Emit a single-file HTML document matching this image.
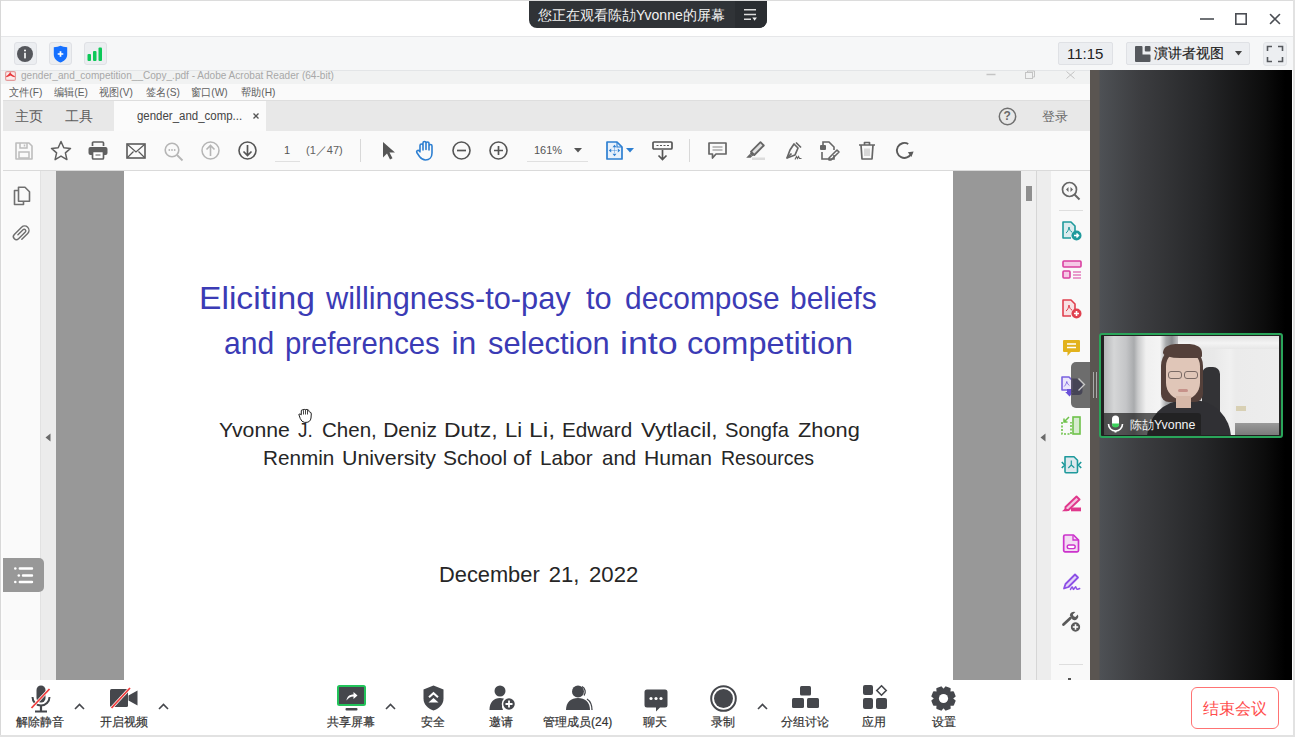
<!DOCTYPE html>
<html><head><meta charset="utf-8">
<style>
*{box-sizing:border-box}
html,body{margin:0;padding:0}
body{width:1295px;height:737px;position:relative;overflow:hidden;background:#fff;font-family:"Liberation Sans",sans-serif;color:#333}
.a{position:absolute}
.t{position:absolute;white-space:nowrap;line-height:1}
svg{position:absolute;overflow:visible}
</style></head><body>

<!-- window borders -->
<div class="a" style="left:0;top:0;width:1295px;height:1px;background:#dcdcdc"></div>
<div class="a" style="left:0;top:0;width:1px;height:737px;background:#d8d8d8"></div>
<div class="a" style="left:1293px;top:0;width:2px;height:737px;background:#e2e2e2"></div>
<div class="a" style="left:0;top:735px;width:1295px;height:2px;background:#e2e2e2"></div>

<!-- title pill -->
<div class="a" style="left:529px;top:1px;width:238px;height:27px;background:#303337;border-radius:0 0 8px 8px"></div>
<div class="a" style="left:735px;top:1px;width:32px;height:27px;background:#2a2d31;border-radius:0 0 8px 0"></div>
<div class="t" style="left:538px;top:8px;font-size:14px;color:#f2f2f2">您正在观看陈劼Yvonne的屏幕</div>
<svg style="left:743px;top:8px" width="16" height="14" viewBox="0 0 16 14">
 <path d="M1 1.8h12M1 6.5h12M1 11.2h7" stroke="#dcdcdc" stroke-width="1.6" fill="none"/>
 <path d="M9.3 9.6h4.6l-2.3 3.2z" fill="#f0f0f0"/>
</svg>

<!-- window controls -->
<svg style="left:1199px;top:12px" width="86" height="14" viewBox="0 0 86 14">
 <path d="M1 7h14" stroke="#4b4e54" stroke-width="1.6"/>
 <rect x="36.8" y="1.8" width="10.4" height="10.4" stroke="#4b4e54" stroke-width="1.6" fill="none"/>
 <path d="M71.5 2.5l9 9M80.5 2.5l-9 9" stroke="#4b4e54" stroke-width="1.6" stroke-linecap="round"/>
</svg>

<!-- second bar -->
<div class="a" style="left:1px;top:36px;width:1292px;height:35px;background:#f6f7f8;border-top:1px solid #e6e7e9"></div>
<div class="a" style="left:14px;top:42px;width:23px;height:23px;background:#eceef1;border:1px solid #dfe1e5;border-radius:3px"></div>
<div class="a" style="left:49px;top:42px;width:23px;height:23px;background:#eceef1;border:1px solid #dfe1e5;border-radius:3px"></div>
<div class="a" style="left:84px;top:42px;width:23px;height:23px;background:#eceef1;border:1px solid #dfe1e5;border-radius:3px"></div>
<svg style="left:17px;top:46px" width="16" height="16" viewBox="0 0 16 16">
 <circle cx="8" cy="8" r="8" fill="#55575c"/><rect x="7.2" y="6.8" width="1.6" height="5.6" fill="#fff"/><circle cx="8" cy="4.6" r="1" fill="#fff"/>
</svg>
<svg style="left:53px;top:45px" width="15" height="18" viewBox="0 0 15 18">
 <path d="M7.5 0.8Q5 2.2 0.8 2.2v7.3c0 4 3 6.8 6.7 8 3.7-1.2 6.7-4 6.7-8V2.2Q10 2.2 7.5 0.8z" fill="#1570ff"/>
 <path d="M7.5 6.2v5.6M4.7 9h5.6" stroke="#fff" stroke-width="1.7"/>
</svg>
<svg style="left:86px;top:46px" width="18" height="16" viewBox="0 0 18 16">
 <rect x="1.5" y="8" width="3.5" height="7" rx="1" fill="#0cc858"/>
 <rect x="7" y="5" width="3.5" height="10" rx="1" fill="#0cc858"/>
 <rect x="12.5" y="1.5" width="3.5" height="13.5" rx="1" fill="#0cc858"/>
</svg>

<div class="a" style="left:1058px;top:42px;width:55px;height:23px;background:#eceef1;border:1px solid #dfe1e5;border-radius:2px"></div>
<div class="t" style="left:1067px;top:46px;font-size:15px;color:#222">11:15</div>
<div class="a" style="left:1126px;top:42px;width:124px;height:23px;background:#eceef1;border:1px solid #dfe1e5;border-radius:2px"></div>
<svg style="left:1135px;top:46px" width="16" height="16" viewBox="0 0 16 16">
 <path d="M1 0h5.5a1 1 0 0 1 1 1v7.5h7a1 1 0 0 1 1 1V15a1 1 0 0 1-1 1H1a1 1 0 0 1-1-1V1a1 1 0 0 1 1-1z" fill="#55585d"/><rect x="9.8" y="0" width="5.7" height="5.5" rx="1" fill="#55585d"/>
</svg>
<div class="t" style="left:1154px;top:46px;font-size:14px;color:#222;-webkit-text-stroke:0.15px #222">演讲者视图</div>
<svg style="left:1235px;top:51px" width="7" height="5" viewBox="0 0 7 5"><path d="M0 0h7L3.5 4.5z" fill="#444"/></svg>
<div class="a" style="left:1263px;top:42px;width:24px;height:24px;background:#eceef1;border:1px solid #e2e4e7;border-radius:3px"></div>
<svg style="left:1266px;top:45px" width="18" height="18" viewBox="0 0 18 18">
 <path d="M1.5 6V1.5H6M12 1.5h4.5V6M16.5 12v4.5H12M6 16.5H1.5V12" stroke="#55585d" stroke-width="1.6" fill="none"/>
</svg>

<!-- ========== SHARED SCREEN ========== -->
<!-- acrobat title bar -->
<div class="a" style="left:1px;top:70px;width:1089px;height:14px;background:#f1f2f2;border-top:1px solid #e3e5e7"></div>
<svg style="left:5px;top:71px" width="11" height="10" viewBox="0 0 11 10">
 <rect x="0.6" y="0.6" width="9.8" height="8.8" rx="1.5" fill="#fbeaea" stroke="#e39a9a" stroke-width="1.2"/>
 <path d="M1 5.2Q3 4.5 4.2 2.6L5.2 0.8 6 2.6Q7.5 4.5 10 5.2L9.5 6.2Q7 5.5 5.5 4.5 3.5 5.8 1.5 6.2z" fill="#e8383a"/>
</svg>
<div class="t" style="left:21px;top:70px;font-size:11px;color:#a8a8a8;transform:scaleX(0.915);transform-origin:0 0">gender_and_competition__Copy_.pdf - Adobe Acrobat Reader (64-bit)</div>
<svg style="left:985px;top:70px" width="92" height="10" viewBox="0 0 92 10">
 <path d="M1.5 4.5h9" stroke="#c4c4c4" stroke-width="1.5"/>
 <rect x="40.5" y="2.5" width="7" height="6" stroke="#c4c4c4" fill="none"/><path d="M42.5 2.5v-1.5h7v6h-2" stroke="#c4c4c4" fill="none"/>
 <path d="M81.5 1.5l8 7M89.5 1.5l-8 7" stroke="#c4c4c4" stroke-width="1"/>
</svg>
<!-- menu bar -->
<div class="a" style="left:1px;top:84px;width:1089px;height:16px;background:#fafafa"></div>
<div class="t" style="left:9px;top:87px;font-size:11px;color:#606060;transform:scaleX(0.925);transform-origin:0 0">文件(F)</div>
<div class="t" style="left:54px;top:87px;font-size:11px;color:#606060;transform:scaleX(0.925);transform-origin:0 0">编辑(E)</div>
<div class="t" style="left:99px;top:87px;font-size:11px;color:#606060;transform:scaleX(0.925);transform-origin:0 0">视图(V)</div>
<div class="t" style="left:146px;top:87px;font-size:11px;color:#606060;transform:scaleX(0.925);transform-origin:0 0">签名(S)</div>
<div class="t" style="left:191px;top:87px;font-size:11px;color:#606060;transform:scaleX(0.925);transform-origin:0 0">窗口(W)</div>
<div class="t" style="left:241px;top:87px;font-size:11px;color:#606060;transform:scaleX(0.925);transform-origin:0 0">帮助(H)</div>
<!-- tab bar -->
<div class="a" style="left:1px;top:100px;width:1089px;height:31px;background:#e8e8e8;border-top:1px solid #dedede"></div>
<div class="a" style="left:114px;top:101px;width:152px;height:30px;background:#fbfbfb"></div>
<div class="t" style="left:15px;top:109px;font-size:14px;color:#5c5c5c">主页</div>
<div class="t" style="left:65px;top:109px;font-size:14px;color:#5c5c5c">工具</div>
<div class="t" style="left:137px;top:110px;font-size:12.5px;color:#444;transform:scaleX(0.917);transform-origin:0 0">gender_and_comp...</div>
<svg style="left:253px;top:113px" width="6" height="6" viewBox="0 0 6 6"><path d="M.5 .5l5 5M5.5 .5l-5 5" stroke="#555" stroke-width="1.3"/></svg>
<svg style="left:998px;top:107px" width="19" height="19" viewBox="0 0 19 19">
 <circle cx="9.5" cy="9.5" r="8.2" stroke="#707070" stroke-width="1.5" fill="none"/>
</svg>
<div class="t" style="left:1003.5px;top:110px;font-size:12px;color:#6a6a6a;font-weight:bold">?</div>
<div class="t" style="left:1042px;top:110px;font-size:13px;color:#6a6a6a">登录</div>
<!-- toolbar -->
<div class="a" style="left:1px;top:131px;width:1089px;height:40px;background:#fafafa;border-bottom:1px solid #dadada"></div>
<!-- toolbar icons -->
<svg style="left:15px;top:142px" width="18" height="18" viewBox="0 0 18 18">
 <path d="M1 1h13l3 3v13H1z" stroke="#bdbdbd" stroke-width="1.6" fill="none" stroke-linejoin="round"/>
 <path d="M5 1v5h7V1M9.5 2.5v2" stroke="#bdbdbd" stroke-width="1.5" fill="none"/>
 <rect x="4" y="10" width="10" height="6" fill="none" stroke="#bdbdbd" stroke-width="1.5"/>
</svg>
<svg style="left:50px;top:140px" width="22" height="21" viewBox="0 0 22 21">
 <path d="M11 1.5l2.8 6.3 6.7.6-5.1 4.5 1.5 6.7L11 16.1l-5.9 3.5 1.5-6.7L1.5 8.4l6.7-.6z" stroke="#606060" stroke-width="1.5" fill="none" stroke-linejoin="round"/>
</svg>
<svg style="left:88px;top:141px" width="20" height="19" viewBox="0 0 20 19">
 <path d="M4.5 5V2a1 1 0 0 1 1-1h9a1 1 0 0 1 1 1v3" stroke="#606060" stroke-width="1.7" fill="none"/>
 <rect x="0.5" y="6" width="19" height="8" rx="2" fill="#606060"/>
 <rect x="4.5" y="10.5" width="11" height="7.5" rx="1" fill="#fff" stroke="#606060" stroke-width="1.7"/>
 <path d="M7.5 14h5" stroke="#999" stroke-width="1.6"/>
</svg>
<svg style="left:126px;top:143px" width="20" height="16" viewBox="0 0 20 16">
 <rect x="1" y="1" width="18" height="14" stroke="#5a5a5a" stroke-width="1.6" fill="none"/>
 <path d="M1.5 1.5L10 9l8.5-7.5M1.5 14.5l6-6M18.5 14.5l-6-6" stroke="#5a5a5a" stroke-width="1.2" fill="none"/>
</svg>
<svg style="left:164px;top:142px" width="20" height="20" viewBox="0 0 20 20">
 <circle cx="8" cy="8" r="6.8" stroke="#b5b5b5" stroke-width="1.6" fill="none"/>
 <path d="M13 13l5.5 5.5" stroke="#b5b5b5" stroke-width="1.8"/>
 <circle cx="5.3" cy="8" r=".9" fill="#b5b5b5"/><circle cx="8" cy="8" r=".9" fill="#b5b5b5"/><circle cx="10.7" cy="8" r=".9" fill="#b5b5b5"/>
</svg>
<svg style="left:201px;top:141px" width="19" height="19" viewBox="0 0 19 19">
 <circle cx="9.5" cy="9.5" r="8.5" stroke="#b5b5b5" stroke-width="1.5" fill="none"/>
 <path d="M9.5 15V4.5M5.5 8.5l4-4 4 4" stroke="#b5b5b5" stroke-width="1.6" fill="none"/>
</svg>
<svg style="left:238px;top:141px" width="19" height="19" viewBox="0 0 19 19">
 <circle cx="9.5" cy="9.5" r="8.5" stroke="#555" stroke-width="1.6" fill="none"/>
 <path d="M9.5 4v10.5M5.5 10.5l4 4 4-4" stroke="#555" stroke-width="1.7" fill="none"/>
</svg>
<div class="t" style="left:284px;top:145px;font-size:11px;color:#555">1</div>
<div class="a" style="left:275px;top:161px;width:25px;height:1px;background:#e0e0e0"></div>
<div class="t" style="left:306px;top:145px;font-size:11px;color:#606060;letter-spacing:0px">(1／47)</div>
<div class="a" style="left:360px;top:139px;width:1px;height:23px;background:#d8d8d8"></div>
<svg style="left:382px;top:141px" width="13" height="19" viewBox="0 0 13 19">
 <path d="M1 1v15.5l4-4 3 6 2.5-1.2-3-5.8h5.5z" fill="#555"/>
</svg>
<svg style="left:415px;top:140px" width="21" height="21" viewBox="0 0 21 21">
 <path d="M5 11V5.5a1.5 1.5 0 0 1 3 0V10M8 9.5V3a1.5 1.5 0 0 1 3 0v6.5M11 9.5V3.5a1.5 1.5 0 0 1 3 0v6.5M14 10V6a1.5 1.5 0 0 1 3 0v7c0 4-2.5 7-6.5 7-3 0-4.5-1.5-6-3.5L1.8 12.5a1.5 1.5 0 0 1 2.3-1.8L5 11.8" stroke="#2d7fd1" stroke-width="1.6" fill="none" stroke-linecap="round" stroke-linejoin="round"/>
</svg>
<svg style="left:452px;top:141px" width="19" height="19" viewBox="0 0 19 19">
 <circle cx="9.5" cy="9.5" r="8.5" stroke="#555" stroke-width="1.6" fill="none"/>
 <path d="M5 9.5h9" stroke="#555" stroke-width="1.7"/>
</svg>
<svg style="left:489px;top:141px" width="19" height="19" viewBox="0 0 19 19">
 <circle cx="9.5" cy="9.5" r="8.5" stroke="#555" stroke-width="1.6" fill="none"/>
 <path d="M5 9.5h9M9.5 5v9" stroke="#555" stroke-width="1.7"/>
</svg>
<div class="t" style="left:534px;top:145px;font-size:11px;color:#555">161%</div>
<svg style="left:574px;top:148px" width="8" height="5" viewBox="0 0 8 5"><path d="M0 0h8L4 4.5z" fill="#555"/></svg>
<div class="a" style="left:527px;top:161px;width:61px;height:1px;background:#e0e0e0"></div>
<svg style="left:606px;top:141px" width="17" height="19" viewBox="0 0 17 19">
 <path d="M1 1h10l5 5v12H1z" stroke="#2d7fd1" stroke-width="1.7" fill="#e8f1fb" stroke-linejoin="round"/>
 <path d="M11 1v5h5" stroke="#2d7fd1" stroke-width="1.1" fill="none"/>
 <path d="M8.5 6.5v6M5.5 9.5h6" stroke="#2d7fd1" stroke-width=".8" stroke-dasharray="1 1"/>
 <path d="M8.5 3.8l-2 2.4h4zM8.5 15.2l-2-2.4h4zM2.8 9.5l2.4-2v4zM14.2 9.5l-2.4-2v4z" fill="#2d7fd1"/>
</svg>
<svg style="left:626px;top:148px" width="8" height="5" viewBox="0 0 8 5"><path d="M0 0h8L4 4.5z" fill="#2d7fd1"/></svg>
<svg style="left:652px;top:141px" width="21" height="20" viewBox="0 0 21 20">
 <rect x="1" y="1" width="19" height="7" rx="1" stroke="#555" stroke-width="1.7" fill="none"/>
 <path d="M4.5 4.5h2M8 4.5h2M11.5 4.5h2M15 4.5h2" stroke="#555" stroke-width="1"/>
 <path d="M10.5 9v9.5M6.5 14.5l4 4 4-4" stroke="#555" stroke-width="1.7" fill="none"/>
</svg>
<div class="a" style="left:689px;top:139px;width:1px;height:23px;background:#d8d8d8"></div>
<svg style="left:708px;top:142px" width="19" height="18" viewBox="0 0 19 18">
 <path d="M1 1h17v11H8l-3.5 4v-4H1z" stroke="#666" stroke-width="1.7" fill="none" stroke-linejoin="round"/>
 <path d="M4.5 5h10M4.5 8h10" stroke="#aaa" stroke-width="1.4"/>
</svg>
<svg style="left:745px;top:141px" width="21" height="20" viewBox="0 0 21 20">
 <path d="M15.5 1.2l3.3 3.3-9.5 9.5-3.3-3.3z" fill="#e0e0e0" stroke="#666" stroke-width="1.8" stroke-linejoin="round"/>
 <path d="M6 10.7l3.3 3.3-2.2 1.2-2.3-2.3z" fill="#666"/>
 <path d="M4.8 12.9l2.3 2.3-1.5 1.5H1.2z" fill="#666"/>
 <rect x="7" y="16.5" width="13" height="2.5" fill="#dcdcdc"/>
</svg>
<svg style="left:782px;top:141px" width="21" height="20" viewBox="0 0 21 20">
 <path d="M12 3l4 4-3 7-8 3 3-8z" stroke="#666" stroke-width="1.7" fill="none" stroke-linejoin="round"/>
 <path d="M5 17l4.5-4.5M14 1.5l5 5" stroke="#666" stroke-width="1.7"/>
 <path d="M13 18.5l1.5-3 1 2 1-2 1 2h2" stroke="#666" stroke-width="1.1" fill="none"/>
</svg>
<svg style="left:819px;top:141px" width="21" height="20" viewBox="0 0 21 20">
 <path d="M4 4V1h6l5 5v3M15 14v4H3v-7" stroke="#666" stroke-width="1.6" fill="none"/>
 <rect x="1" y="4" width="6" height="5" rx="1" fill="#666"/>
 <path d="M18 9l2 2-8 8h-2v-2z" stroke="#666" stroke-width="1.6" fill="none" stroke-linejoin="round"/>
</svg>
<svg style="left:858px;top:141px" width="18" height="19" viewBox="0 0 18 19">
 <path d="M1 4h16M6.5 4V1.5h5V4M3 4l1 14h10l1-14" stroke="#666" stroke-width="1.7" fill="none" stroke-linejoin="round"/>
 <path d="M7 7.5v7.5M9 7.5v7.5M11 7.5v7.5" stroke="#9a9a9a" stroke-width=".7"/>
</svg>
<svg style="left:895px;top:141px" width="19" height="19" viewBox="0 0 19 19">
 <path d="M13.25 3.0A7.5 7.5 0 1 0 16.3 12.4" stroke="#5a5a5a" stroke-width="1.9" fill="none"/>
 <path d="M12.8 11.2l5.8-.6-2.2 5.4z" fill="#5a5a5a"/>
</svg>

<!-- left panel -->
<div class="a" style="left:1px;top:171px;width:39px;height:509px;background:#fafafa"></div>
<div class="a" style="left:40px;top:171px;width:16px;height:509px;background:#ececec;border-left:1px solid #e2e2e2"></div>
<svg style="left:45px;top:433px" width="6" height="9" viewBox="0 0 6 9"><path d="M5.5 0.5v8L0.5 4.5z" fill="#6a6a6a"/></svg>
<svg style="left:13px;top:186px" width="18" height="20" viewBox="0 0 18 20">
 <path d="M5.5 4.5H1.5v14h9v-3" stroke="#707070" stroke-width="1.6" fill="none" stroke-linejoin="round"/>
 <path d="M5.5 1.2h6.5l4.5 4.5v9.5h-11z" stroke="#707070" stroke-width="1.6" fill="none" stroke-linejoin="round"/>
</svg>
<svg style="left:11px;top:224px" width="20" height="20" viewBox="0 0 20 20">
 <g transform="rotate(225 10 10) scale(0.9) translate(1.1,1.1)">
 <path d="M10.3 6.5v8a1.8 1.8 0 0 1-3.6 0V3.8a3.3 3.3 0 0 1 6.6 0v11.4a4.8 4.8 0 0 1-9.6 0V6" stroke="#6e6e6e" stroke-width="1.6" fill="none" stroke-linecap="round" transform="translate(1.5,0.5)"/>
 </g>
</svg>
<div class="a" style="left:3px;top:558px;width:41px;height:34px;background:#989898;border-radius:0 5px 5px 0"></div>
<svg style="left:13px;top:565px" width="22" height="20" viewBox="0 0 22 20">
 <path d="M6.8 3.5h12.2M10 10.5h9M6.8 17h12.2" stroke="#fff" stroke-width="2.4" stroke-linecap="round"/><circle cx="2.3" cy="3.5" r="1.3" fill="#fff"/><circle cx="5.8" cy="10.5" r="1.3" fill="#fff"/><circle cx="2.3" cy="17" r="1.3" fill="#fff"/>
</svg>
<!-- page area -->
<div class="a" style="left:56px;top:171px;width:68px;height:509px;background:#989898"></div>
<div class="a" style="left:124px;top:171px;width:829px;height:509px;background:#fff"></div>
<div class="a" style="left:953px;top:171px;width:68px;height:509px;background:#989898"></div>
<!-- pdf content -->
<div class="t" style="left:199.25px;top:282px;font-size:32px;color:#3b3bb5;transform:scaleX(1.0505);transform-origin:0 0">Eliciting</div>
<div class="t" style="left:325.70px;top:282px;font-size:32px;color:#3b3bb5;transform:scaleX(0.9622);transform-origin:0 0">willingness-to-pay</div>
<div class="t" style="left:585.90px;top:282px;font-size:32px;color:#3b3bb5;transform:scaleX(0.9615);transform-origin:0 0">to</div>
<div class="t" style="left:624.77px;top:282px;font-size:32px;color:#3b3bb5;transform:scaleX(0.9350);transform-origin:0 0">decompose</div>
<div class="t" style="left:790.13px;top:282px;font-size:32px;color:#3b3bb5;transform:scaleX(0.9367);transform-origin:0 0">beliefs</div>
<div class="t" style="left:224.06px;top:327px;font-size:32px;color:#3b3bb5;transform:scaleX(0.9400);transform-origin:0 0">and</div>
<div class="t" style="left:284.87px;top:327px;font-size:32px;color:#3b3bb5;transform:scaleX(0.9157);transform-origin:0 0">preferences</div>
<div class="t" style="left:451.50px;top:327px;font-size:32px;color:#3b3bb5;transform:scaleX(1.0000);transform-origin:0 0">in</div>
<div class="t" style="left:488.34px;top:327px;font-size:32px;color:#3b3bb5;transform:scaleX(0.9642);transform-origin:0 0">selection</div>
<div class="t" style="left:619.56px;top:327px;font-size:32px;color:#3b3bb5;transform:scaleX(1.1188);transform-origin:0 0">into</div>
<div class="t" style="left:687.48px;top:327px;font-size:32px;color:#3b3bb5;transform:scaleX(1.0155);transform-origin:0 0">competition</div>
<div class="t" style="left:219.09px;top:419px;font-size:21px;color:#262626;transform:scaleX(1.0118);transform-origin:0 0">Yvonne</div>
<div class="t" style="left:298.20px;top:419px;font-size:21px;color:#262626;transform:scaleX(0.9067);transform-origin:0 0">J.</div>
<div class="t" style="left:321.92px;top:419px;font-size:21px;color:#262626;transform:scaleX(0.9774);transform-origin:0 0">Chen,</div>
<div class="t" style="left:383.20px;top:419px;font-size:21px;color:#262626;transform:scaleX(1.0000);transform-origin:0 0">Deniz</div>
<div class="t" style="left:444.21px;top:419px;font-size:21px;color:#262626;transform:scaleX(1.0933);transform-origin:0 0">Dutz,</div>
<div class="t" style="left:505.41px;top:419px;font-size:21px;color:#262626;transform:scaleX(1.0462);transform-origin:0 0">Li</div>
<div class="t" style="left:528.94px;top:419px;font-size:21px;color:#262626;transform:scaleX(1.1778);transform-origin:0 0">Li,</div>
<div class="t" style="left:561.53px;top:419px;font-size:21px;color:#262626;transform:scaleX(0.9868);transform-origin:0 0">Edward</div>
<div class="t" style="left:640.80px;top:419px;font-size:21px;color:#262626;transform:scaleX(1.0671);transform-origin:0 0">Vytlacil,</div>
<div class="t" style="left:724.74px;top:419px;font-size:21px;color:#262626;transform:scaleX(0.9591);transform-origin:0 0">Songfa</div>
<div class="t" style="left:797.66px;top:419px;font-size:21px;color:#262626;transform:scaleX(1.0368);transform-origin:0 0">Zhong</div>
<div class="t" style="left:262.83px;top:447px;font-size:21px;color:#262626;transform:scaleX(0.9855);transform-origin:0 0">Renmin</div>
<div class="t" style="left:341.76px;top:447px;font-size:21px;color:#262626;transform:scaleX(1.0189);transform-origin:0 0">University</div>
<div class="t" style="left:443.00px;top:447px;font-size:21px;color:#262626;transform:scaleX(1.0000);transform-origin:0 0">School</div>
<div class="t" style="left:513.45px;top:447px;font-size:21px;color:#262626;transform:scaleX(1.0471);transform-origin:0 0">of</div>
<div class="t" style="left:539.64px;top:447px;font-size:21px;color:#262626;transform:scaleX(0.9808);transform-origin:0 0">Labor</div>
<div class="t" style="left:601.82px;top:447px;font-size:21px;color:#262626;transform:scaleX(0.9788);transform-origin:0 0">and</div>
<div class="t" style="left:644.29px;top:447px;font-size:21px;color:#262626;transform:scaleX(1.0062);transform-origin:0 0">Human</div>
<div class="t" style="left:720.94px;top:447px;font-size:21px;color:#262626;transform:scaleX(0.9276);transform-origin:0 0">Resources</div>
<div class="t" style="left:438.52px;top:564px;font-size:22px;color:#262626;transform:scaleX(0.9919);transform-origin:0 0">December</div>
<div class="t" style="left:548.80px;top:564px;font-size:22px;color:#262626;transform:scaleX(1.0000);transform-origin:0 0">21,</div>
<div class="t" style="left:588.69px;top:564px;font-size:22px;color:#262626;transform:scaleX(1.0064);transform-origin:0 0">2022</div>
<svg style="left:298px;top:409px" width="14" height="14" viewBox="0 0 14 14">
 <path d="M0.8 5.4Q2 4.2 3.3 5.8L3.3 1.8Q3.5 0.5 4.8 0.8Q6.2 0.1 7.5 0.6Q9 0.1 10.2 1Q11.3 1.3 11.2 2.6L11.5 3Q13.4 3 13.3 5L13 9Q12.3 13.4 8 13.4L6.6 13.4Q3.6 13 2.3 9.6Z" stroke="#222" stroke-width="1" fill="#fff" stroke-linejoin="round"/>
 <path d="M5.5 1.2v4.3M7.5 0.8v4.7M9.5 1v4.5" stroke="#333" stroke-width="0.9"/>
</svg>

<!-- scrollbar + right strips -->
<div class="a" style="left:1021px;top:171px;width:15px;height:509px;background:#f0f0f0"></div>
<div class="a" style="left:1026px;top:186px;width:6px;height:15px;background:#8f8f8f"></div>
<div class="a" style="left:1036px;top:171px;width:1px;height:509px;background:#d6d6d6"></div>
<div class="a" style="left:1037px;top:171px;width:14px;height:509px;background:#ededed"></div>
<svg style="left:1040px;top:433px" width="6" height="9" viewBox="0 0 6 9"><path d="M5.5 0.5v8L0.5 4.5z" fill="#6a6a6a"/></svg>
<div class="a" style="left:1051px;top:171px;width:39px;height:509px;background:#f9f9f9"></div>
<!-- right tools -->
<svg style="left:1061px;top:181px" width="20" height="20" viewBox="0 0 20 20">
 <circle cx="8.5" cy="8.5" r="7" stroke="#666" stroke-width="1.7" fill="none"/>
 <path d="M13.5 13.5l5 5" stroke="#666" stroke-width="2"/>
 <path d="M7.5 6l-2.5 2.5 2.5 2.5zM9.5 6l2.5 2.5-2.5 2.5z" fill="#666"/>
</svg>
<div class="a" style="left:1059px;top:210px;width:24px;height:1px;background:#dedede"></div>
<svg style="left:1062px;top:221px" width="20" height="20" viewBox="0 0 20 20">
 <path d="M9 17H1V1h8l4 4v5" stroke="#1f9a9c" stroke-width="1.6" fill="#dcecee" stroke-linejoin="round"/>
 <path d="M4 12c1.5-1 2.5-3 3-6 .5 3 1.5 4.5 3 5" stroke="#1f9a9c" stroke-width="1" fill="none"/>
 <circle cx="14.5" cy="14.5" r="5" fill="#1f9a9c"/>
 <path d="M12 14.5h4.5M14.5 12.5l2 2-2 2" stroke="#fff" stroke-width="1.5" fill="none"/>
</svg>
<svg style="left:1062px;top:260px" width="20" height="19" viewBox="0 0 20 19">
 <rect x="1" y="1" width="18" height="6" rx="1" stroke="#d93fa0" stroke-width="1.6" fill="#f5c9e6"/>
 <rect x="1" y="11" width="7" height="7" rx="1" stroke="#d93fa0" stroke-width="1.6" fill="#f5c9e6"/>
 <path d="M11 12h8M11 15h8M11 18h8" stroke="#d93fa0" stroke-width="1.2"/>
</svg>
<svg style="left:1062px;top:299px" width="20" height="20" viewBox="0 0 20 20">
 <path d="M9 17H1V1h8l4 4v5" stroke="#e0404f" stroke-width="1.6" fill="#f8e2e4" stroke-linejoin="round"/>
 <path d="M4 12c1.5-1 2.5-3 3-6 .5 3 1.5 4.5 3 5" stroke="#e0404f" stroke-width="1" fill="none"/>
 <circle cx="14.5" cy="14.5" r="5" fill="#e0404f"/>
 <path d="M12 14.5h5M14.5 12v5" stroke="#fff" stroke-width="1.6"/>
</svg>
<svg style="left:1062px;top:339px" width="19" height="18" viewBox="0 0 19 18">
 <path d="M1 2a1 1 0 0 1 1-1h15a1 1 0 0 1 1 1v10a1 1 0 0 1-1 1H9l-3.5 4v-4H2a1 1 0 0 1-1-1z" fill="#e2b21c"/>
 <path d="M5 5h9M5 8.5h9" stroke="#fff" stroke-width="1.4"/>
</svg>
<svg style="left:1061px;top:376px" width="23" height="22" viewBox="0 0 23 22">
 <path d="M11 2.5h5l5.5 5.5v7a4 4 0 0 1-4 4H11z" fill="#261c78"/>
 <path d="M1 1h7l3 3v10H1z" stroke="#7a62e0" stroke-width="1.6" fill="#ece6fb" stroke-linejoin="round"/>
 <path d="M3.2 10.5c1-1 2-2.5 2.6-5 .5 2 1.3 3 2.6 4" stroke="#7a62e0" stroke-width=".9" fill="none"/>
 <path d="M6 13v3h-1.8l4.3 4.5 4.3-4.5H11v-3z" fill="#6a52d8"/>
</svg>
<svg style="left:1061px;top:416px" width="20" height="19" viewBox="0 0 20 19">
 <path d="M1 6v12h9V6" stroke="#6ec24a" stroke-width="1.6" fill="none" stroke-dasharray="2 1.5"/>
 <rect x="12" y="1" width="7" height="17" stroke="#6ec24a" stroke-width="1.6" fill="#d7ecd0"/>
 <path d="M8 1L3 6M3 2.5V6h3.5" stroke="#6ec24a" stroke-width="1.5" fill="none"/>
</svg>
<svg style="left:1061px;top:455px" width="21" height="20" viewBox="0 0 21 20">
 <path d="M4 1.8h9l3.5 3.5v11.5a1 1 0 0 1-1 1H5a1 1 0 0 1-1-1z" fill="#dfe9ee" stroke="#1f9a9c" stroke-width="1.6" stroke-linejoin="round"/>
 <path d="M0.8 7l2.8 3-2.8 3M20.2 7l-2.8 3 2.8 3" stroke="#1f9a9c" stroke-width="1.6" fill="none"/>
 <path d="M10.3 5.5v4.5l-3 3M10.3 10l3 2.8" stroke="#1f9a9c" stroke-width="1.2" fill="none"/>
</svg>
<svg style="left:1061px;top:495px" width="21" height="18" viewBox="0 0 21 18">
 <path d="M15.5 1.5l3 3-11 10.5H4.5v-3z" fill="#f4c6e0" stroke="#e0388c" stroke-width="1.9" stroke-linejoin="round"/>
 <path d="M4.5 13l-3.5 3.2h5.5z" fill="#e0388c"/>
 <rect x="10" y="12.5" width="10" height="3.8" fill="#e0388c"/>
</svg>
<svg style="left:1063px;top:534px" width="17" height="19" viewBox="0 0 17 19">
 <path d="M2 1h8.5L15.5 6v10.5a1.3 1.3 0 0 1-1.3 1.3H2a1.3 1.3 0 0 1-1.3-1.3V2.3A1.3 1.3 0 0 1 2 1z" fill="#f3dcf3" stroke="#cc33cc" stroke-width="1.7" stroke-linejoin="round"/>
 <path d="M10 1.5v4.5h5" fill="none" stroke="#cc33cc" stroke-width="1.3"/>
 <rect x="4.2" y="11" width="8" height="3.6" rx="1.8" fill="#fff" stroke="#cc33cc" stroke-width="1.4"/>
</svg>
<svg style="left:1061px;top:573px" width="21" height="19" viewBox="0 0 21 19">
 <path d="M14 1.5l3 3L7.5 14 3 15.5l1.5-4.5z" fill="#e4d6f8" stroke="#8c4fe6" stroke-width="1.8" stroke-linejoin="round"/>
 <path d="M9.5 16.5c1-2.5 2-3.5 2.3-1.5s.7 2 1.8 0 1.2-1.5 1.6 0 1.5 1.5 3.5 0.5" stroke="#8c4fe6" stroke-width="1.5" fill="none" stroke-linecap="round"/>
</svg>
<svg style="left:1061px;top:611px" width="21" height="22" viewBox="0 0 21 22">
 <path d="M2.5 13.5l7-6.5" stroke="#5a5a5a" stroke-width="2.8" stroke-linecap="round"/>
 <path d="M8.8 4.2a4 4 0 0 1 5.6-3.2l-2.6 2.5.8 1.8 1.8.7 2.5-2.6a4 4 0 0 1-5.2 5.4z" fill="#5a5a5a"/>
 <circle cx="14.5" cy="16" r="5.3" fill="#5a5a5a" stroke="#f9f9f9" stroke-width="1.2"/>
 <path d="M11.8 16h5.4M14.5 13.3v5.4" stroke="#fff" stroke-width="1.6"/>
</svg>
<div class="a" style="left:1059px;top:664px;width:24px;height:1px;background:#dedede"></div>
<div class="a" style="left:1068px;top:678px;width:3px;height:2px;background:#555"></div>

<div class="a" style="left:1px;top:84px;width:2px;height:596px;background:#fcfcfc"></div>
<!-- dark right area -->
<div class="a" style="left:1090px;top:70px;width:202px;height:610px;background:linear-gradient(90deg,#5a5551 0,#5a5551 9px,#4e5155 10px,#3c3d40 50px,#252628 115px,#0c0c0c 175px,#000 195px)"></div>
<!-- collapse handle -->
<div class="a" style="left:1071px;top:362px;width:19px;height:46px;background:rgba(78,78,78,.82);border-radius:5px 0 0 5px"></div>
<svg style="left:1077px;top:377px" width="9" height="15" viewBox="0 0 9 15"><path d="M1.5 1.5l6 6-6 6" stroke="#c8c8c8" stroke-width="1.3" fill="none"/></svg>
<div class="a" style="left:1093px;top:372px;width:1px;height:26px;background:#aaa"></div>
<div class="a" style="left:1096px;top:372px;width:1px;height:26px;background:#aaa"></div>
<!-- video -->
<div class="a" style="left:1099px;top:333px;width:184px;height:105px;border:2px solid #2aa55a;border-radius:3px;background:#222"></div>
<div class="a" id="vid" style="left:1104px;top:336px;width:175px;height:99px;overflow:hidden;background:#e9e9e9">
 <div class="a" style="left:0;top:0;width:175px;height:99px;background:linear-gradient(90deg,#b4b6b8 0,#d5d6d7 10px,#c4c5c7 22px,#a9abad 30px,#c9cacb 34px,#f0f0f0 42px,#f4f4f4 56px,#a8aaac 62px,#8a8c8f 68px,#c0c1c3 74px,#e6e6e6 80px,#e9e9e9 110px,#f0f0f0 126px,#ebebeb 132px,#ededed 175px)"></div>
 <div class="a" style="left:74px;top:0;width:101px;height:13px;background:linear-gradient(180deg,#e0e0e0,#f4f4f4 55%,#e6e6e6)"></div>
 <div class="a" style="left:98px;top:31px;width:18px;height:68px;background:#333336;border-radius:7px 7px 0 0"></div>
 <div class="a" style="left:43px;top:64px;width:84px;height:45px;background:#303034;border-radius:38px 38px 0 0"></div>
 <div class="a" style="left:57px;top:9px;width:42px;height:57px;background:#54403a;border-radius:21px 21px 8px 8px"></div>
 <div class="a" style="left:62px;top:15px;width:34px;height:49px;background:#e0c6b8;border-radius:15px 15px 17px 17px"></div>
 <div class="a" style="left:59px;top:8px;width:39px;height:14px;background:#54403a;border-radius:50% 50% 30% 70%/100% 100% 20% 60%"></div>
 <div class="a" style="left:72px;top:60px;width:15px;height:12px;background:#d6b8a8"></div>
 <div class="a" style="left:64px;top:35px;width:14px;height:8px;border:1px solid #7a6a65;border-radius:3px"></div>
 <div class="a" style="left:80px;top:35px;width:14px;height:8px;border:1px solid #7a6a65;border-radius:3px"></div>
 <div class="a" style="left:74px;top:53px;width:10px;height:3px;background:#c6928a;border-radius:2px"></div>
 <div class="a" style="left:132px;top:70px;width:10px;height:5px;background:#d8d0b4"></div>
 <div class="a" style="left:131px;top:87px;width:44px;height:12px;background:linear-gradient(180deg,#9a9a9a,#7a7a7a)"></div>
 <div class="a" style="left:0;top:77px;width:97px;height:22px;background:rgba(28,28,28,.7);border-radius:0 3px 0 0"></div>
</div>
<svg style="left:1107px;top:415px" width="17" height="18" viewBox="0 0 17 18">
 <rect x="5" y="0.5" width="7" height="11.5" rx="3.5" fill="#fff"/>
 <path d="M5 8.5h7v0.5a3.5 3.5 0 0 1-7 0z" fill="#3ad15a"/>
 <path d="M1.5 9a7 7 0 0 0 14 0" stroke="#fff" stroke-width="1.6" fill="none"/>
 <path d="M8.5 16v1.5" stroke="#fff" stroke-width="2"/>
</svg>
<div class="t" style="left:1130px;top:419px;font-size:12.4px;color:#f4f4f4">陈劼Yvonne</div>


<!-- ========== BOTTOM TOOLBAR ========== -->
<!-- bottom toolbar -->
<svg style="left:29px;top:685px" width="24" height="28" viewBox="0 0 24 28">
 <rect x="7.5" y="0.5" width="9" height="17" rx="4.5" fill="#45474c"/>
 <path d="M3.5 12a8.5 8.5 0 0 0 17 0" stroke="#45474c" stroke-width="2" fill="none"/>
 <path d="M12 20.5v5M6 26.5h12" stroke="#45474c" stroke-width="2.2"/>
 <path d="M20.5 4L2.5 23" stroke="#fff" stroke-width="3"/>
 <path d="M20.5 4L2.5 23" stroke="#f03c3c" stroke-width="1.8"/>
</svg>
<div class="t" style="left:16px;top:716px;font-size:12px;color:#333;-webkit-text-stroke:0.2px #333">解除静音</div>
<svg style="left:74px;top:703px" width="11" height="7" viewBox="0 0 11 7"><path d="M1 6l4.5-4.5L10 6" stroke="#45474c" stroke-width="1.6" fill="none"/></svg>
<svg style="left:109px;top:687px" width="30" height="22" viewBox="0 0 30 22">
 <rect x="1" y="2" width="18" height="18" rx="1.5" fill="#45474c"/>
 <path d="M19.5 8.5l9-5v15l-9-5z" fill="#45474c"/>
 <path d="M21 1L2.5 21" stroke="#fff" stroke-width="3"/>
 <path d="M21 1L2.5 21" stroke="#f03c3c" stroke-width="1.8"/>
</svg>
<div class="t" style="left:100px;top:716px;font-size:12px;color:#333;-webkit-text-stroke:0.2px #333">开启视频</div>
<svg style="left:158px;top:703px" width="11" height="7" viewBox="0 0 11 7"><path d="M1 6l4.5-4.5L10 6" stroke="#45474c" stroke-width="1.6" fill="none"/></svg>

<svg style="left:337px;top:685px" width="29" height="26" viewBox="0 0 29 26">
 <rect x="1" y="1" width="27" height="19" rx="1.5" fill="#45474c" stroke="#22c35a" stroke-width="2"/>
 <path d="M9.5 15.5c.5-4 3-6 7-6V7l4 3.5-4 3.5v-2.5c-3 0-5 1.5-7 4z" fill="#fff"/>
 <rect x="8.5" y="23" width="12" height="2.5" rx="1" fill="#45474c"/>
</svg>
<div class="t" style="left:327px;top:716px;font-size:12px;color:#333;-webkit-text-stroke:0.2px #333">共享屏幕</div>
<svg style="left:385px;top:703px" width="11" height="7" viewBox="0 0 11 7"><path d="M1 6l4.5-4.5L10 6" stroke="#45474c" stroke-width="1.6" fill="none"/></svg>

<svg style="left:423px;top:685px" width="21" height="26" viewBox="0 0 21 26">
 <path d="M10.5 0.5L20.5 4.5v9c0 6-4.5 10-10 12-5.5-2-10-6-10-12v-9z" fill="#45474c"/>
 <path d="M6 12.2l4.5-4 4.5 4" stroke="#fff" stroke-width="2" fill="none"/><path d="M5.5 17.5l5-4.5 5 4.5z" fill="#fff"/>
</svg>
<div class="t" style="left:421px;top:716px;font-size:12px;color:#333;-webkit-text-stroke:0.2px #333">安全</div>

<svg style="left:489px;top:685px" width="27" height="26" viewBox="0 0 27 26">
 <circle cx="11" cy="6" r="5.5" fill="#45474c"/>
 <path d="M0.5 25c0-8 4.5-12 10.5-12 2.5 0 4.5.7 6 2a7 7 0 0 0-3 10z" fill="#45474c"/>
 <circle cx="20" cy="19" r="6.5" fill="#45474c" stroke="#fff" stroke-width="1.5"/>
 <path d="M16.5 19h7M20 15.5v7" stroke="#fff" stroke-width="1.8"/>
</svg>
<div class="t" style="left:489px;top:716px;font-size:12px;color:#333;-webkit-text-stroke:0.2px #333">邀请</div>

<svg style="left:565px;top:685px" width="29" height="26" viewBox="0 0 29 26">
 <circle cx="13" cy="6.5" r="6" fill="#45474c"/>
 <path d="M1 25c0-8 5-12 12-12s12 4 12 12z" fill="#45474c"/>
 <path d="M17 1.5a6 6 0 0 1 2 9M22 14c3 2 5 5.5 5 11" stroke="#45474c" stroke-width="1.3" fill="none"/>
</svg>
<div class="t" style="left:543px;top:716px;font-size:12px;color:#333;-webkit-text-stroke:0.2px #333">管理成员(24)</div>

<svg style="left:644px;top:689px" width="24" height="23" viewBox="0 0 24 23">
 <path d="M0.5 3a2.5 2.5 0 0 1 2.5-2.5h18A2.5 2.5 0 0 1 23.5 3v13a2.5 2.5 0 0 1-2.5 2.5h-5l-4 4v-4H3A2.5 2.5 0 0 1 .5 16z" fill="#45474c"/>
 <circle cx="7" cy="9.5" r="1.6" fill="#fff"/><circle cx="12" cy="9.5" r="1.6" fill="#fff"/><circle cx="17" cy="9.5" r="1.6" fill="#fff"/>
</svg>
<div class="t" style="left:643px;top:716px;font-size:12px;color:#333;-webkit-text-stroke:0.2px #333">聊天</div>

<svg style="left:710px;top:685px" width="27" height="27" viewBox="0 0 27 27">
 <circle cx="13.5" cy="13.5" r="12.3" stroke="#45474c" stroke-width="2" fill="none"/>
 <circle cx="13.5" cy="13.5" r="9.5" fill="#45474c"/>
</svg>
<div class="t" style="left:711px;top:716px;font-size:12px;color:#333;-webkit-text-stroke:0.2px #333">录制</div>
<svg style="left:757px;top:703px" width="11" height="7" viewBox="0 0 11 7"><path d="M1 6l4.5-4.5L10 6" stroke="#45474c" stroke-width="1.6" fill="none"/></svg>

<svg style="left:792px;top:686px" width="27" height="22" viewBox="0 0 27 22">
 <rect x="8" y="0" width="11" height="9.5" rx="1.5" fill="#45474c"/>
 <rect x="0" y="12" width="12" height="10" rx="1.5" fill="#45474c"/>
 <rect x="15" y="12" width="12" height="10" rx="1.5" fill="#45474c"/>
</svg>
<div class="t" style="left:781px;top:716px;font-size:12px;color:#333;-webkit-text-stroke:0.2px #333">分组讨论</div>

<svg style="left:863px;top:685px" width="24" height="24" viewBox="0 0 24 24">
 <rect x="0" y="0" width="10" height="10" rx="2" fill="#45474c"/>
 <rect x="0" y="13" width="10" height="11" rx="2" fill="#45474c"/>
 <rect x="13" y="13" width="11" height="11" rx="2" fill="#45474c"/>
 <path d="M18.5 0.8l4.7 4.7-4.7 4.7-4.7-4.7z" stroke="#45474c" stroke-width="1.6" fill="none"/>
</svg>
<div class="t" style="left:862px;top:716px;font-size:12px;color:#333;-webkit-text-stroke:0.2px #333">应用</div>

<svg style="left:931px;top:686px" width="25" height="25" viewBox="0 0 25 25">
 <path d="M13.06 3.32 L14.81 1.13 L18.90 2.83 L18.60 5.61 L19.39 6.40 L22.17 6.10 L23.87 10.19 L21.68 11.94 L21.68 13.06 L23.87 14.81 L22.17 18.90 L19.39 18.60 L18.60 19.39 L18.90 22.17 L14.81 23.87 L13.06 21.68 L11.94 21.68 L10.19 23.87 L6.10 22.17 L6.40 19.39 L5.61 18.60 L2.83 18.90 L1.13 14.81 L3.32 13.06 L3.32 11.94 L1.13 10.19 L2.83 6.10 L5.61 6.40 L6.40 5.61 L6.10 2.83 L10.19 1.13 L11.94 3.32Z" fill="#45474c" stroke="#45474c" stroke-width="1.6" stroke-linejoin="round"/>
 <circle cx="12.5" cy="12.5" r="4.6" fill="#fff"/>
</svg>
<div class="t" style="left:932px;top:716px;font-size:12px;color:#333;-webkit-text-stroke:0.2px #333">设置</div>

<div class="a" style="left:1191px;top:687px;width:88px;height:42px;border:1.5px solid #ff7373;border-radius:6px"></div>
<div class="t" style="left:1203px;top:701px;font-size:16px;color:#ff4d4d">结束会议</div>


</body></html>
